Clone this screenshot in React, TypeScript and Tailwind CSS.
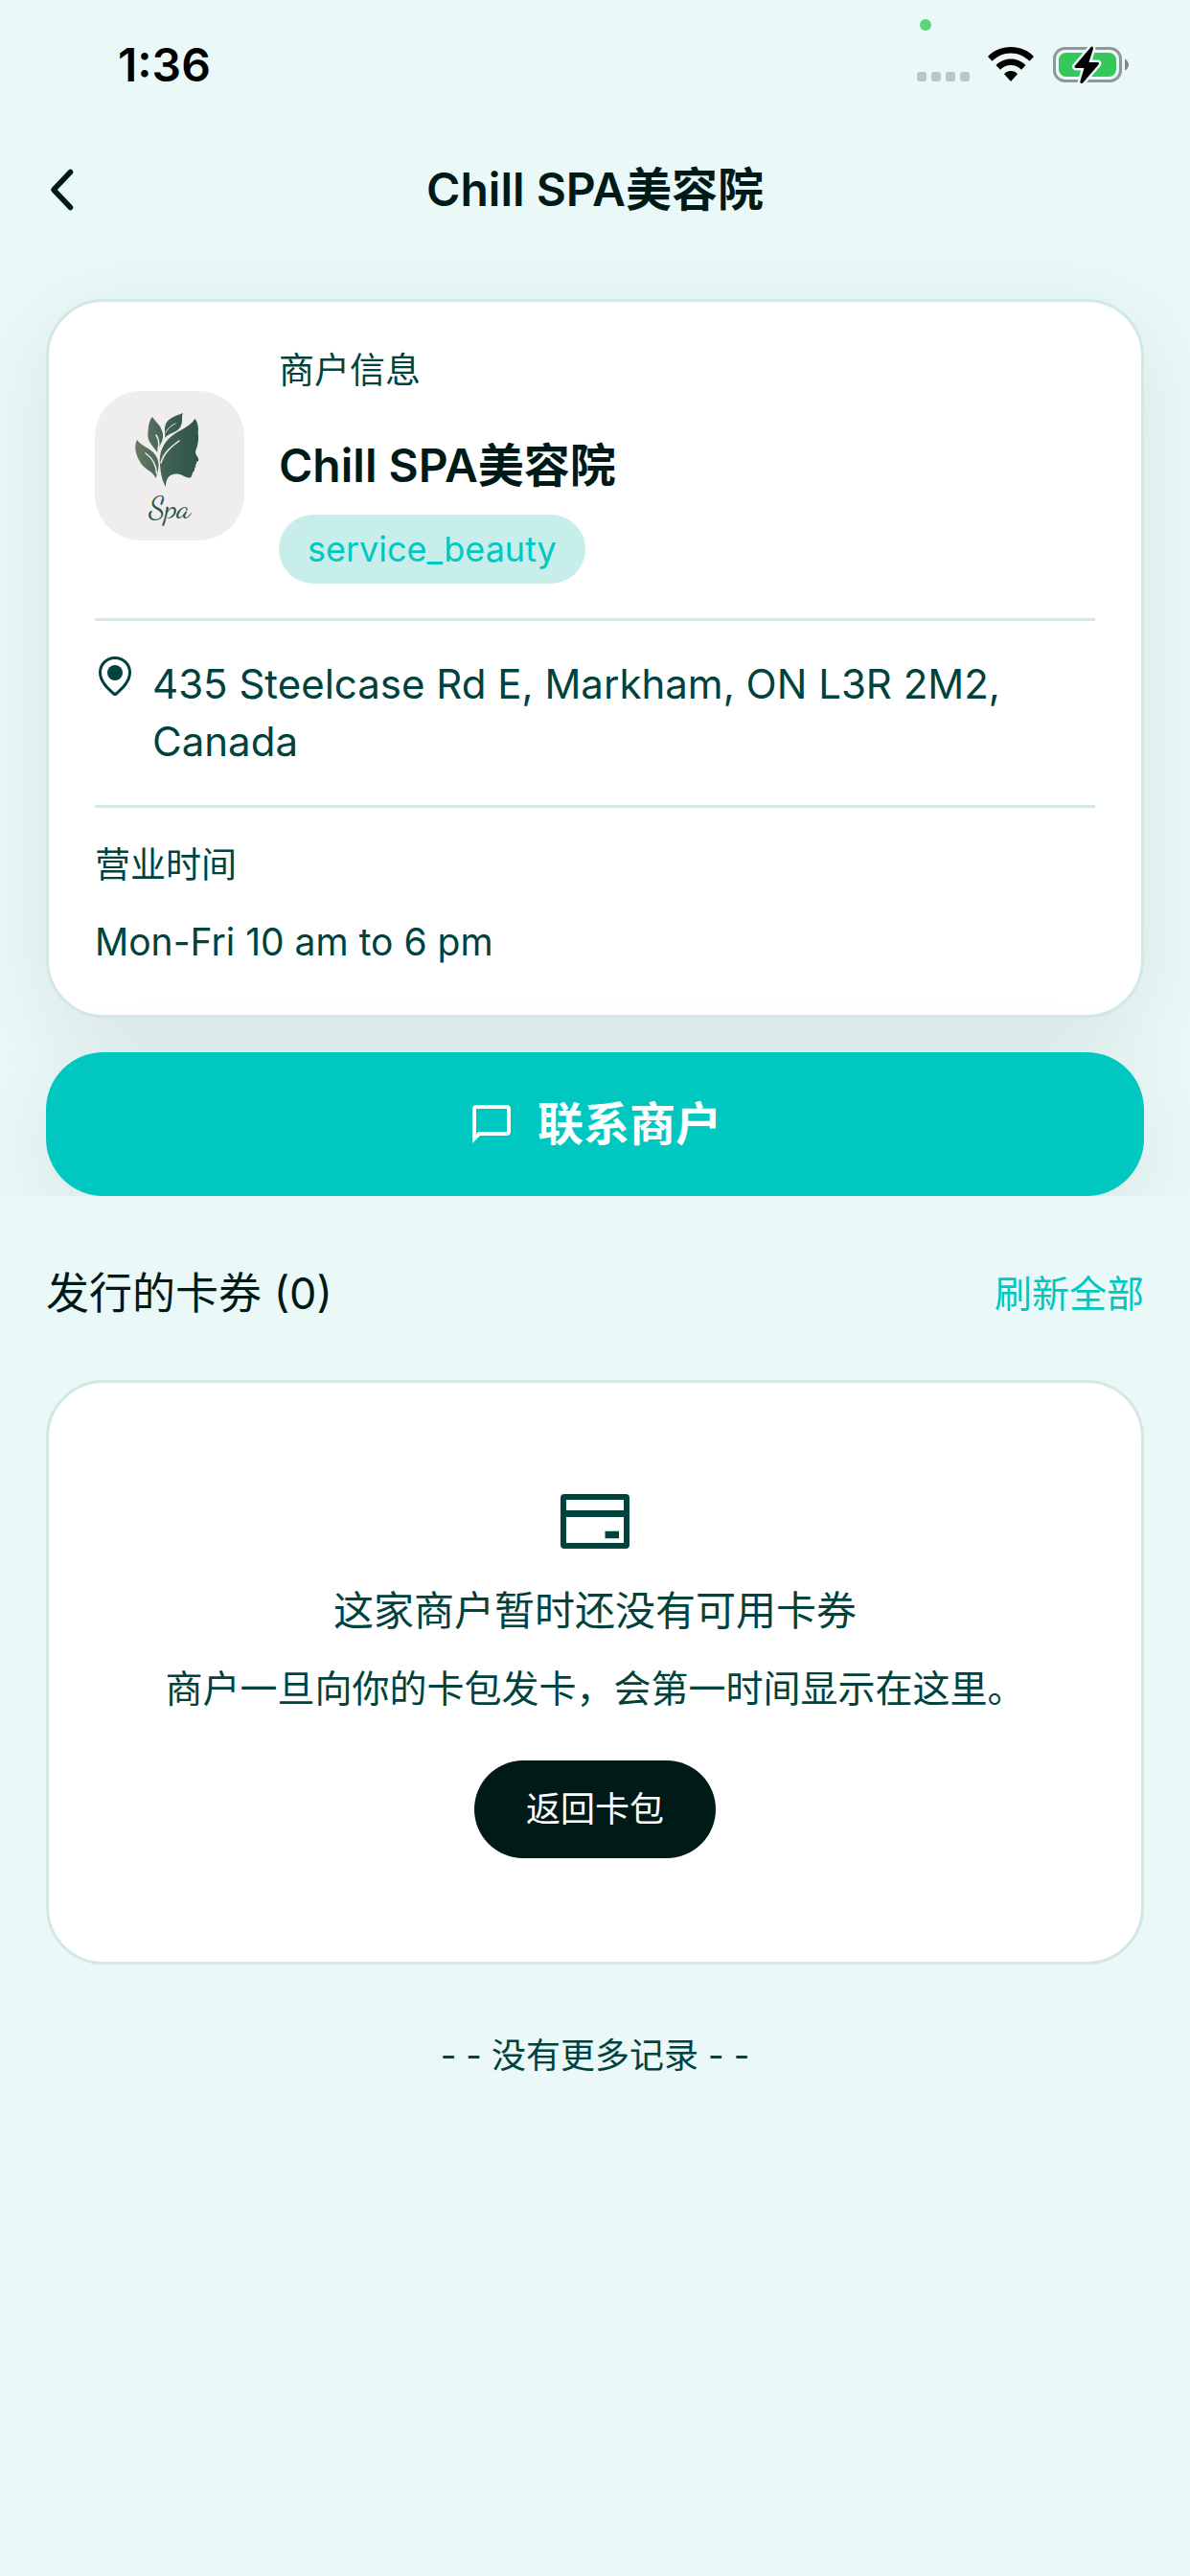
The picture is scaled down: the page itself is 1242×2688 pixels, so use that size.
import type { ReactNode } from "react";

function StatusBar() {
  return (
    <div className="relative flex h-[136px] items-center justify-between pr-[64px] pl-[123px]">
      <time className="text-[48px] leading-[56px] font-semibold text-black">1:36</time>
      <span className="absolute top-5 right-[270px] size-3 rounded-full bg-[#5ad57a]" />
      <div className="flex items-center">
        <div className="mt-6 mr-[18px] flex gap-[5px]">
          {[0, 1, 2, 3].map((n) => (
            <span key={n} className="size-[10px] rounded-[3px] bg-[#bbc6c6]" />
          ))}
        </div>
        <svg viewBox="0 1 50 38" className="mr-[18px] h-[38px] w-[50px]" aria-label="Wi-Fi">
          <path d="M25 1C34.500 1 43.200 4.700 49 11L44.500 15.800C39.500 10.600 32.700 7.400 25 7.400S10.500 10.600 5.500 15.800L1 11C6.800 4.700 15.500 1 25 1Z" />
          <path d="M25 13.500C31 13.500 36.500 16 40.500 20L36 24.800C33.200 21.900 29.300 20 25 20S16.800 21.900 14 24.800L9.500 20C13.500 16 19 13.500 25 13.500Z" />
          <path d="M25 26C27.700 26 30.200 27.200 32 29.200L25 37L18 29.200C19.800 27.200 22.300 26 25 26Z" />
        </svg>
        <svg viewBox="0 0 80 42" className="h-[42px] w-[80px]" aria-label="Battery charging">
          <rect x="2.500" y="3.500" width="69" height="34" rx="11" fill="none" stroke="#8f9897" strokeWidth="3" />
          <path d="M76 14.500C78.200 15.500 80 18 80 20.500S78.200 25.500 76 26.500Z" fill="#7f8887" />
          <rect x="7" y="8" width="60" height="25" rx="7.500" fill="#35c759" />
          <path
            d="M40.500 2.200L24 21.500C23 22.600 23.600 24 25 24H33.500L29.500 37.500C28.700 40 31 41 32.600 39L48.500 20.500C49.500 19.200 49 18 47.500 18H38.500L42.800 4.500C43.400 2.200 42 .6 40.500 2.200Z"
            stroke="#eaf8f8"
            strokeWidth="5"
            paintOrder="stroke"
          />
        </svg>
      </div>
    </div>
  );
}

function SpaLogo() {
  return (
    <svg viewBox="0 0 156 156" className="size-[156px] shrink-0 rounded-[48px] bg-[#efedee]" role="img" aria-label="Spa">
      <defs>
        <linearGradient id="leafFill" x1="42" y1="60" x2="109" y2="60" gradientUnits="userSpaceOnUse">
          <stop offset="0" stopColor="#687a65" />
          <stop offset="0.500" stopColor="#3f6152" />
          <stop offset="0.800" stopColor="#34594c" />
          <stop offset="1" stopColor="#2b5548" />
        </linearGradient>
      </defs>
      <g fill="url(#leafFill)">
        <path d="M44 51C50 59 61 60 65 70C68 77 66 84 63.500 91C60 82 51 83 46 72C42 64 41 57 44 51Z" />
        <path d="M60 27C64 33 70 37 71 45C72 53 66 58 65 64C60 56 54 53 55.500 42C56 36 57 30 60 27Z" />
        <path d="M92 23C84 26 75 29 73.500 36C72 41 74 44 73 49C78 43 87 44 90 36C92 31 90 27 92 23Z" />
        <path d="M104.500 29C99 38 87 41 79 48C70 56 67 66 68 76C68.500 86 70 93 74 100C74 91 78 86 86 86.500C91 87 96 91 99 90.500C102 90 101 86 103 84C105 83 103 80 105.500 79C104 76 107 77 106 74C110 73 108 70 105.500 66C104 62 107 60 107.500 54C109 48 107 44 108 40C107.500 35 107 32 104.500 29Z" />
      </g>
      <g fill="none" stroke="#efedee" strokeLinecap="round" strokeWidth="1.500">
        <path d="M69 75C72 64 80 58 88 52" />
        <path d="M53 65C60 70 64 77 64.500 86" />
        <path d="M64 46C68 52 67 57 66 61" />
        <path d="M74 43C77 38 80 36 84 34" strokeWidth="1" />
      </g>
      <text x="78" y="132" textAnchor="middle" fill="#2b5548" className="font-['Dancing_Script','Liberation_Serif',serif] text-[32px]">
        Spa
      </text>
    </svg>
  );
}

function PinIcon() {
  return (
    <svg viewBox="0 0 42 42" className="size-[42px] shrink-0" aria-hidden="true">
      <path d="M21 2.500C29.500 2.500 36.500 9 36.500 17.500C36.500 27.500 28 35 21 41C14 35 5.500 27.500 5.500 17.500C5.500 9 12.500 2.500 21 2.500Z" fill="none" stroke="currentColor" strokeWidth="3" />
      <circle cx="21" cy="18" r="8" fill="currentColor" />
    </svg>
  );
}

function Card({ children, className }: { children: ReactNode; className: string }) {
  return <div className={`rounded-[60px] border-3 border-[#d2e8e5] bg-white ${className}`}>{children}</div>;
}

export default function App() {
  return (
    <div className="min-h-screen bg-[#eaf8f8] font-['Inter','Noto_Sans_CJK_SC',sans-serif] text-[#00423d]">
      <StatusBar />
      <header className="grid h-[128px] grid-cols-[96px_1fr_96px] items-center px-3 pb-1">
        <button type="button" aria-label="返回" className="flex size-[96px] items-center justify-center text-[#001a18]">
          <svg viewBox="0 0 48 48" className="size-12" fill="none" stroke="currentColor" strokeWidth="5.500" strokeLinecap="round" strokeLinejoin="round">
            <path d="M37.500 5.500L20 24L37.500 42.500" />
          </svg>
        </button>
        <h1 className="text-center text-[48px] leading-[72px] font-semibold text-[#001a18]">Chill SPA美容院</h1>
      </header>

      <main>
        <section className="overflow-hidden px-12 pt-12">
          <Card className="p-12 shadow-[0_24px_96px_rgba(0,0,0,0.08)]">
            <div className="flex items-center gap-9 pb-9">
              <SpaLogo />
              <div className="flex flex-col items-start">
                <p className="text-[37px] leading-[48px]">商户信息</p>
                <h2 className="mt-[39px] text-[48px] leading-[72px] font-semibold text-[#001a18]">Chill SPA美容院</h2>
                <span className="mt-[15px] rounded-full bg-[#c8eeec] px-[30px] text-[36px] leading-[72px] text-[#00c8c0]">
                  service_beauty
                </span>
              </div>
            </div>
            <div className="flex items-start gap-[18px] border-y-3 border-[#d2e8e5] py-9">
              <PinIcon />
              <address className="text-[42px] leading-[60px] not-italic">435 Steelcase Rd E, Markham, ON L3R 2M2, Canada</address>
            </div>
            <div className="pt-9">
              <h3 className="text-[37px] leading-[48px]">营业时间</h3>
              <p className="mt-7 text-[39px] leading-[56px]">Mon-Fri 10 am to 6 pm</p>
            </div>
          </Card>
          <button
            type="button"
            className="mt-9 flex h-[150px] w-full items-center justify-center gap-6 rounded-[60px] bg-[#00c8c0] text-[48px] leading-[72px] font-semibold text-white shadow-[0_24px_96px_rgba(0,0,0,0.08)]"
          >
            <svg viewBox="0 0 24 24" className="size-12" fill="currentColor" aria-hidden="true">
              <path d="M4 4h16v12H5.170L4 17.170V4m0-2c-1.100 0-1.990.9-1.990 2L2 22l4-4h14c1.100 0 2-.9 2-2V4c0-1.100-.9-2-2-2H4z" />
            </svg>
            联系商户
          </button>
        </section>

        <section className="px-12 pt-[72px]">
          <div className="mb-[60px] flex items-center justify-between">
            <h2 className="text-[45px] leading-[60px] text-[#001a18]">发行的卡券 (0)</h2>
            <button type="button" className="text-[39px] leading-[60px] text-[#00c8c0]">
              刷新全部
            </button>
          </div>
          <Card className="flex flex-col items-center px-12 py-[108px] text-center">
            <svg viewBox="0 0 72 72" className="size-[72px]" fill="none" stroke="currentColor" strokeWidth="6" aria-hidden="true">
              <rect x="3" y="11" width="66" height="51" rx="1" />
              <path d="M3 28.500H69" strokeWidth="7" />
              <path d="M46.500 50.500H61" strokeWidth="7.500" />
            </svg>
            <p className="mt-7 text-[42px] leading-[60px]">这家商户暂时还没有可用卡券</p>
            <p className="mt-6 text-[39px] leading-[54px]">商户一旦向你的卡包发卡，会第一时间显示在这里。</p>
            <button type="button" className="mt-12 rounded-full bg-[#001a18] px-[54px] text-[36px] leading-[102px] text-white">
              返回卡包
            </button>
          </Card>
          <p className="mt-[68px] text-center text-[36px] leading-[54px]">- - 没有更多记录 - -</p>
        </section>
      </main>
    </div>
  );
}
